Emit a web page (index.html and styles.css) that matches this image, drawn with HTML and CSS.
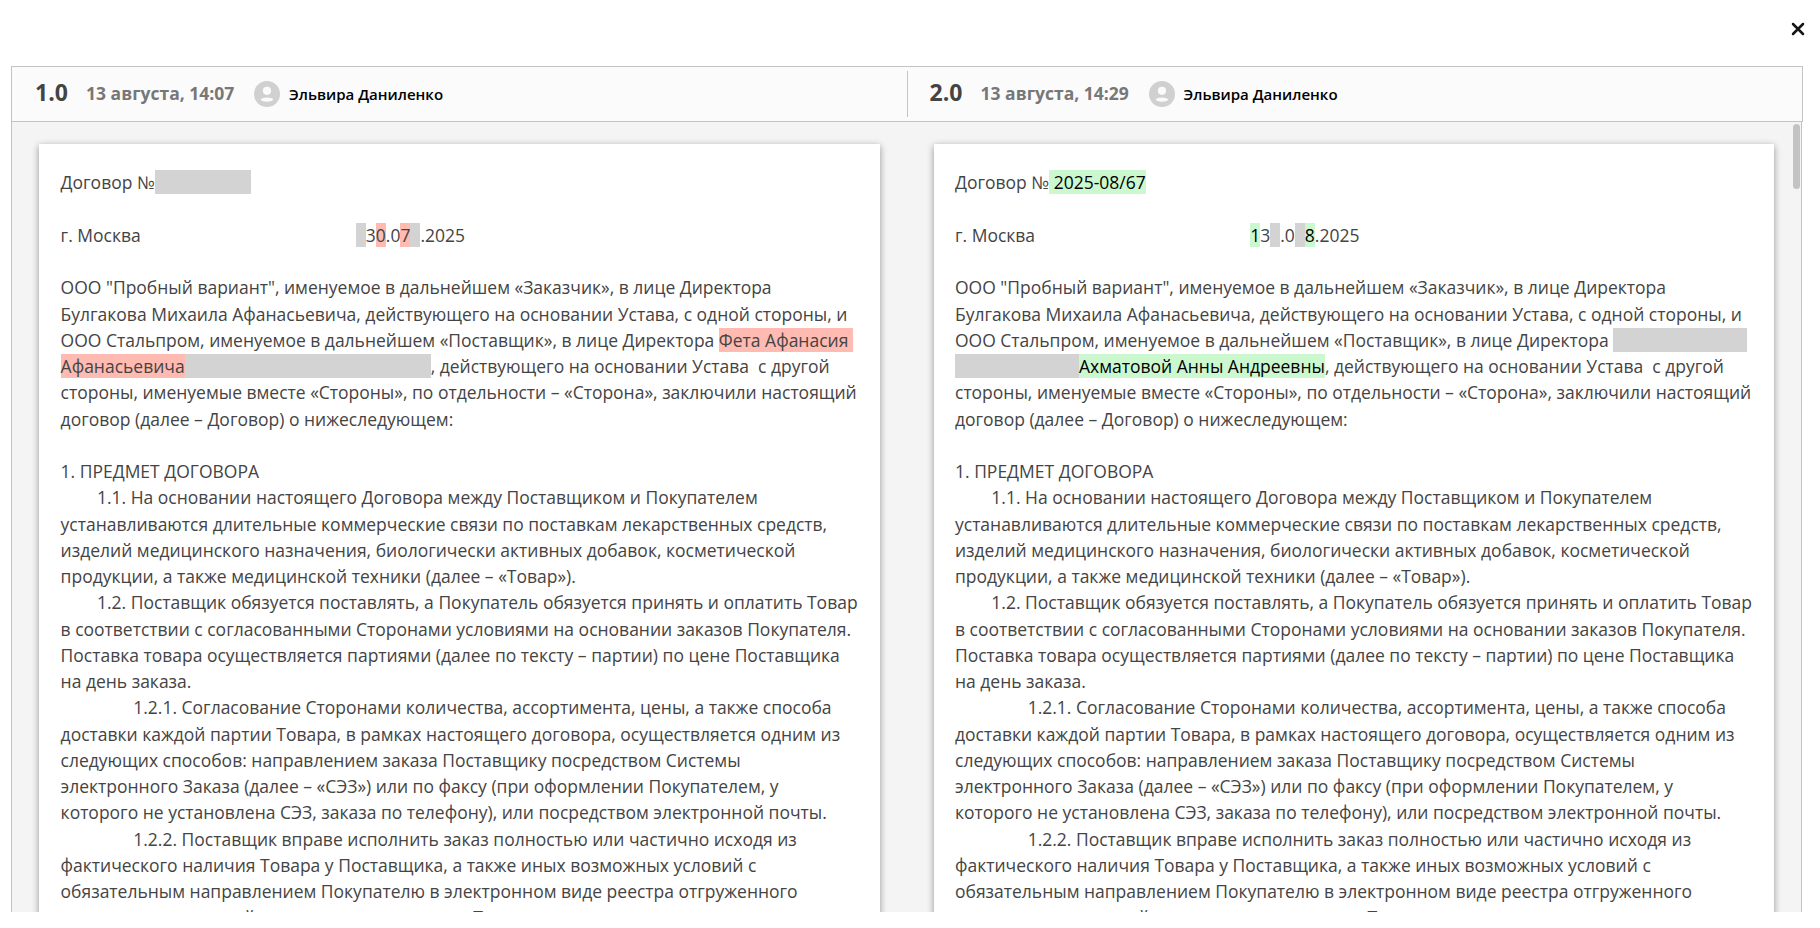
FILE: index.html
```html
<!DOCTYPE html>
<html lang="ru">
<head>
<meta charset="utf-8">
<title>Сравнение версий</title>
<link rel="stylesheet" href="styles.css">
</head>
<body>
<div class="topbar">
  <svg class="close" viewBox="0 0 14 14"><path d="M2 2L12 12M12 2L2 12"/></svg>
</div>
<div class="compare">
  <div class="header">
    <div class="version">
      <span class="num">1.0</span><span class="date">13 августа, 14:07</span>
      <svg class="avatar" viewBox="0 0 26 26"><circle cx="13" cy="13" r="13" fill="#d0d0d0"/><circle cx="13" cy="9.8" r="4.1" fill="#fbfbfb"/><path d="M6.5 18.6C8.5 15.9 17.5 15.9 19.5 18.6C17.5 21.6 8.5 21.6 6.5 18.6Z" fill="#fbfbfb"/></svg>
      <span class="name">Эльвира Даниленко</span>
    </div>
    <div class="version second">
      <span class="num">2.0</span><span class="date">13 августа, 14:29</span>
      <svg class="avatar" viewBox="0 0 26 26"><circle cx="13" cy="13" r="13" fill="#d0d0d0"/><circle cx="13" cy="9.8" r="4.1" fill="#fbfbfb"/><path d="M6.5 18.6C8.5 15.9 17.5 15.9 19.5 18.6C17.5 21.6 8.5 21.6 6.5 18.6Z" fill="#fbfbfb"/></svg>
      <span class="name">Эльвира Даниленко</span>
    </div>
  </div>
  <div class="body">
    <div class="page">Договор №<i class="gap w-number"></i>

г. Москва						 <i class="gap w-digit"></i>3<span class="del">0</span>.0<span class="del">7</span><i class="gap w-digit"></i>.2025

ООО "Пробный вариант", именуемое в дальнейшем «Заказчик», в лице Директора
Булгакова Михаила Афанасьевича, действующего на основании Устава, с одной стороны, и
ООО Стальпром, именуемое в дальнейшем «Поставщик», в лице Директора <span class="del">Фета Афанасия </span>
<span class="del">Афанасьевича</span><i class="gap w-name"></i>, действующего на основании Устава  с другой
стороны, именуемые вместе «Стороны», по отдельности – «Сторона», заключили настоящий
договор (далее – Договор) о нижеследующем:

1. ПРЕДМЕТ ДОГОВОРА
	1.1. На основании настоящего Договора между Поставщиком и Покупателем
устанавливаются длительные коммерческие связи по поставкам лекарственных средств,
изделий медицинского назначения, биологически активных добавок, косметической
продукции, а также медицинской техники (далее – «Товар»).
	1.2. Поставщик обязуется поставлять, а Покупатель обязуется принять и оплатить Товар
в соответствии с согласованными Сторонами условиями на основании заказов Покупателя.
Поставка товара осуществляется партиями (далее по тексту – партии) по цене Поставщика
на день заказа.
		1.2.1. Согласование Сторонами количества, ассортимента, цены, а также способа
доставки каждой партии Товара, в рамках настоящего договора, осуществляется одним из
следующих способов: направлением заказа Поставщику посредством Системы
электронного Заказа (далее – «СЭЗ») или по факсу (при оформлении Покупателем, у
которого не установлена СЭЗ, заказа по телефону), или посредством электронной почты.
		1.2.2. Поставщик вправе исполнить заказ полностью или частично исходя из
фактического наличия Товара у Поставщика, а также иных возможных условий с
обязательным направлением Покупателю в электронном виде реестра отгруженного
товара и размер такой поставки или отказов от Товара</div>
    <div class="page">Договор №<span class="ins"> 2025-08/67</span>

г. Москва						 <span class="ins">1</span>3<i class="gap w-digit"></i>.0<i class="gap w-digit"></i><span class="ins">8</span>.2025

ООО "Пробный вариант", именуемое в дальнейшем «Заказчик», в лице Директора
Булгакова Михаила Афанасьевича, действующего на основании Устава, с одной стороны, и
ООО Стальпром, именуемое в дальнейшем «Поставщик», в лице Директора <i class="gap w-first"></i>
<i class="gap w-last"></i><span class="ins">Ахматовой Анны Андреевны</span>, действующего на основании Устава  с другой
стороны, именуемые вместе «Стороны», по отдельности – «Сторона», заключили настоящий
договор (далее – Договор) о нижеследующем:

1. ПРЕДМЕТ ДОГОВОРА
	1.1. На основании настоящего Договора между Поставщиком и Покупателем
устанавливаются длительные коммерческие связи по поставкам лекарственных средств,
изделий медицинского назначения, биологически активных добавок, косметической
продукции, а также медицинской техники (далее – «Товар»).
	1.2. Поставщик обязуется поставлять, а Покупатель обязуется принять и оплатить Товар
в соответствии с согласованными Сторонами условиями на основании заказов Покупателя.
Поставка товара осуществляется партиями (далее по тексту – партии) по цене Поставщика
на день заказа.
		1.2.1. Согласование Сторонами количества, ассортимента, цены, а также способа
доставки каждой партии Товара, в рамках настоящего договора, осуществляется одним из
следующих способов: направлением заказа Поставщику посредством Системы
электронного Заказа (далее – «СЭЗ») или по факсу (при оформлении Покупателем, у
которого не установлена СЭЗ, заказа по телефону), или посредством электронной почты.
		1.2.2. Поставщик вправе исполнить заказ полностью или частично исходя из
фактического наличия Товара у Поставщика, а также иных возможных условий с
обязательным направлением Покупателю в электронном виде реестра отгруженного
товара и размер такой поставки или отказов от Товара</div>
    <div class="thumb"></div>
  </div>
</div>
</body>
</html>
```
FILE: styles.css
```css
* { box-sizing: border-box; }
body {
  margin: 0;
  height: 928px;
  overflow: hidden;
  background: #fff;
  font-family: "Open Sans", "Noto Sans", sans-serif;
  color: #444;
}
.topbar {
  height: 66px;
  padding: 22px 15px 0 0;
  display: flex;
  justify-content: flex-end;
}
.close { width: 14px; height: 14px; }
.close path { stroke: #151515; stroke-width: 2.5; stroke-linecap: round; fill: none; }
.compare { margin-left: 11px; width: 1792px; }
.header {
  display: flex;
  height: 56px;
  padding: 4px 0;
  border: 1px solid #c3c3c3;
  background: #fbfbfb;
}
.version {
  flex: none;
  width: 895px;
  display: flex;
  align-items: center;
  padding-left: 23px;
}
.second { border-left: 1px solid #c3c3c3; padding-left: 21.5px; }
.num { font-size: 23px; font-weight: 700; width: 51px; line-height: 42px; padding-bottom: 4px; }
.date { font-size: 17.5px; font-weight: 700; color: #777; width: 168px; white-space: nowrap; padding-bottom: 2px; }
.avatar { width: 26px; height: 26px; margin-right: 9px; }
.name { font-size: 15.05px; font-weight: 600; color: #000; white-space: nowrap; line-height: 22px; }
.body {
  position: relative;
  display: flex;
  gap: 54px;
  width: 1791px;
  height: 790px;
  padding: 22px 0 0 27px;
  overflow: hidden;
  background: #f4f4f4;
  border: 1px solid #c3c3c3;
  border-width: 0 1px;
}
.page {
  flex: none;
  width: 841px;
  height: 900px;
  padding: 25.3px 21px 0 21.6px;
  background: #fff;
  box-shadow: 0 2px 7px rgba(0, 0, 0, .4);
  font-size: 17.49px;
  line-height: 26.25px;
  white-space: pre;
  tab-size: 8;
}
.page + .page { width: 840px; padding-left: 21px; }
.del { background: #ffbab1; }
.ins { background: #ccf8cf; color: #000; }
.gap { display: inline-block; height: 24px; margin: -3px 0; vertical-align: -2px; background: #d3d3d3; }
.w-digit { width: 10px; }
.w-number { width: 96px; }
.w-name { width: 246px; }
.w-first { width: 134px; }
.w-last { width: 124px; }
.thumb {
  position: absolute;
  top: 2px;
  right: 1px;
  width: 7px;
  height: 65px;
  border-radius: 4px;
  background: #c3c3c3;
}
```
